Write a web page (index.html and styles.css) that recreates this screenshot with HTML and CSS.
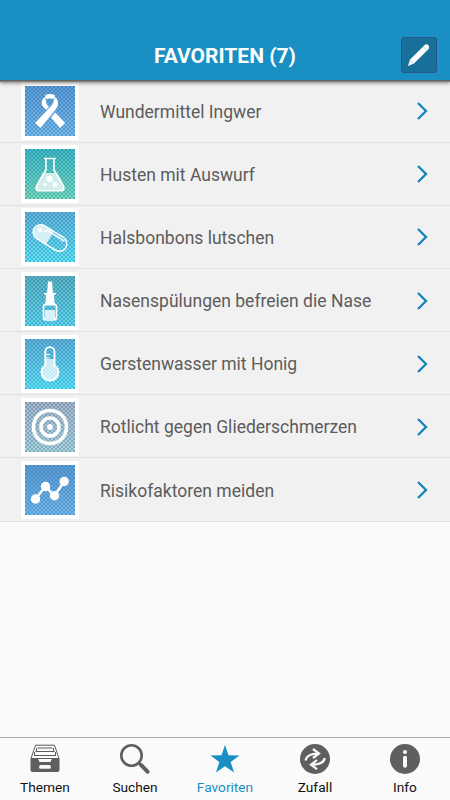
FILE: index.html
```html
<!DOCTYPE html>
<html lang="de">
<head>
<meta charset="utf-8">
<title>Favoriten</title>
<link rel="stylesheet" href="styles.css">
</head>
<body>
<header class="header">
  <h1>FAVORITEN (7)</h1>
  <button class="edit" aria-label="Bearbeiten">
    <svg width="36" height="36" viewBox="0 0 36 36"><path d="M7 29l2-6.500L23.500 8.200q2-1.700 3.800 .1t.3 3.800L13 26.500z" fill="#fff"/><path d="M8.700 22.800l4 3.800M22.300 9.700l3.900 3.900" stroke="#b5ced9" stroke-width="1"/></svg>
  </button>
</header>
<main class="list">
  <a class="row"><span class="tile blue"><svg viewBox="0 0 50 50"><g fill="#fff"><path d="M20 10.300Q20.500 8 25 8T30 10.300L29.300 13.300Q25 11.800 20.700 13.300z"/><path d="M19.300 11L21.200 14.500Q20.500 18 24 20.800L21.300 24Q14.500 18.500 17.500 13.500z"/><path d="M30.700 11L28.800 14Q29 17 26.500 19.500L10 37L15.500 42L31 23Q35.500 17.500 30.700 11z"/><path d="M26 31.500L30.300 26.500L40.200 37L35 42z"/></g></svg></span><span class="label">Wundermittel Ingwer</span><svg class="chevron" viewBox="0 0 12 20"><path d="M2 2l8 8-8 8"/></svg></a>
  <a class="row"><span class="tile green"><svg viewBox="0 0 50 50"><path d="M17.500 24h15l6.500 14q0 3.500-3 3.500H14q-3 0-3-3.500z" fill="#fff" opacity=".72"/><path d="M19 9.500h12M21 10v11L11.500 37q-1.500 4.800 2.500 4.800h22q4 0 2.500-4.800L29 21V10" fill="none" stroke="#fff" stroke-width="1.600"/><circle cx="24.500" cy="30" r="3.200" fill="#fff"/><circle cx="30" cy="35.500" r="2.600" fill="#fff"/><circle cx="20" cy="35.500" r="1.700" fill="#fff"/></svg></span><span class="label">Husten mit Auswurf</span><svg class="chevron" viewBox="0 0 12 20"><path d="M2 2l8 8-8 8"/></svg></a>
  <a class="row"><span class="tile cyan"><svg viewBox="0 0 50 50"><g transform="rotate(32 25 26)"><path d="M25 18.500H14.500a7.500 7.500 0 0 0 0 15H25z" fill="#fff" opacity=".75"/><rect x="6.500" y="18.500" width="37" height="15" rx="7.500" fill="none" stroke="#fff" stroke-width="1.500"/><path d="M18 21h20" stroke="#fff" stroke-width="1.700" stroke-linecap="round"/></g><circle cx="15" cy="18" r="2.300" fill="#fff"/><circle cx="20" cy="19.500" r="1.300" fill="#fff"/><circle cx="37.500" cy="28.500" r="1.100" fill="#fff"/></svg></span><span class="label">Halsbonbons lutschen</span><svg class="chevron" viewBox="0 0 12 20"><path d="M2 2l8 8-8 8"/></svg></a>
  <a class="row"><span class="tile teal"><svg viewBox="0 0 50 50"><path d="M23 5.500h4l1 11.500h3V18.500h-2l.5 8.500h-9l.5-8.500h-2V17h3z" fill="#fff"/><rect x="18.500" y="28" width="13" height="16" rx="3" fill="none" stroke="#fff" stroke-width="1.700"/><path d="M20 27h10v2.500H20z" fill="#fff"/><path d="M20 34h10v9H20z" fill="#fff" opacity=".78"/></svg></span><span class="label">Nasenspülungen befreien die Nase</span><svg class="chevron" viewBox="0 0 12 20"><path d="M2 2l8 8-8 8"/></svg></a>
  <a class="row"><span class="tile cyan"><svg viewBox="0 0 50 50"><path d="M20.500 20h9v7.500q4 2 4 6a8.500 8.500 0 0 1-17 0q0-4 4-6z" fill="#fff" opacity=".72"/><path d="M20.300 12.700a4.600 4.600 0 0 1 9.200 0V26.500q4 2.500 4 6.500a8.500 8.500 0 0 1-17 0q0-4 3.800-6.500z" fill="none" stroke="#fff" stroke-width="1.900"/><path d="M21 15.500h4M21 19h3" stroke="#fff" stroke-width="1.100"/></svg></span><span class="label">Gerstenwasser mit Honig</span><svg class="chevron" viewBox="0 0 12 20"><path d="M2 2l8 8-8 8"/></svg></a>
  <a class="row"><span class="tile gray"><svg viewBox="0 0 50 50"><g fill="none" stroke="#fff" stroke-width="3.600"><circle cx="25" cy="25" r="16.500"/><circle cx="25" cy="25" r="9"/></g><circle cx="25" cy="25" r="2.900" fill="#fff"/></svg></span><span class="label">Rotlicht gegen Gliederschmerzen</span><svg class="chevron" viewBox="0 0 12 20"><path d="M2 2l8 8-8 8"/></svg></a>
  <a class="row"><span class="tile blue"><svg viewBox="0 0 50 50"><path d="M10.500 34L20.500 21.500L29.500 31L39 16.500" fill="none" stroke="#fff" stroke-width="2.500"/><g fill="#fff"><circle cx="10.500" cy="34" r="4.700"/><circle cx="20.500" cy="21.500" r="4.700"/><circle cx="29.500" cy="30.800" r="4.700"/><circle cx="39.200" cy="16.500" r="4.700"/></g></svg></span><span class="label">Risikofaktoren meiden</span><svg class="chevron" viewBox="0 0 12 20"><path d="M2 2l8 8-8 8"/></svg></a>
</main>
<nav class="tabs">
  <a class="tab"><svg viewBox="0 0 30 30"><path d="M5.500 1.200h19L29 14.500H1z" fill="#fafafa" stroke="#5a5a5a" stroke-width="1"/><path d="M7.500 4h15M6.500 4v4M23.500 4v4M5.500 7.500h19M4.500 8v4M25.500 8v4M5 11.500h20" fill="none" stroke="#5a5a5a" stroke-width="1"/><path d="M.5 14.500h7.500l1.500 3.500h11l1.500-3.500h7.500V26q0 2-2 2H2.500q-2 0-2-2z" fill="#5f5f5f"/><rect x="9" y="21" width="12" height="3.800" rx="1.900" fill="#fafafa"/></svg>Themen</a>
  <a class="tab"><svg viewBox="0 0 30 30"><circle cx="11.500" cy="11.500" r="10.200" fill="none" stroke="#5f5f5f" stroke-width="2.600"/><path d="M19 19l2.500 2.500" stroke="#5f5f5f" stroke-width="2.500"/><path d="M21.200 21.200l6.300 6.500" stroke="#5f5f5f" stroke-width="4" stroke-linecap="round"/></svg>Suchen</a>
  <a class="tab active"><svg viewBox="0 0 30 30"><path d="M15 1l3.500 10.300L29.500 11.500L20.700 18L24 28.500L15 22.200L6 28.500L9.300 18L.5 11.500l11-.2z" fill="#1a8fc3"/></svg>Favoriten</a>
  <a class="tab"><svg viewBox="0 0 30 30"><circle cx="15" cy="15" r="15" fill="#5f5f5f"/><path d="M5.500 16.500Q7 9.500 18 9.500M13 5l6 4.500l-6 4.500M24.800 14Q23.500 20.700 12 20.700M17 16l-6 4.700l6 4.500" fill="none" stroke="#fafafa" stroke-width="2.200"/></svg>Zufall</a>
  <a class="tab"><svg viewBox="0 0 30 30"><circle cx="15" cy="15" r="15" fill="#5f5f5f"/><circle cx="15" cy="8" r="2.100" fill="#fafafa"/><path d="M15 13.700v8" stroke="#fafafa" stroke-width="4" stroke-linecap="round"/></svg>Info</a>
</nav>
</body>
</html>
```
FILE: styles.css
```css
* { box-sizing: border-box; }
body {
  margin: 0;
  width: 450px;
  height: 800px;
  display: flex;
  flex-direction: column;
  overflow: hidden;
  background: #fafafa;
  font-family: Roboto, sans-serif;
}
.header {
  height: 80px;
  flex: none;
  display: grid;
  grid-template-columns: 1fr auto 1fr;
  align-items: start;
  padding: 37px 13px 0;
  background: #1a8fc3;
  box-shadow: 0 1px 0 #65645f, 0 2px 1px #85807d, 0 3px 4px rgba(0, 0, 0, .45);
  position: relative;
  z-index: 1;
}
h1 {
  grid-column: 2;
  margin: 6px 0 0;
  color: #fff;
  font-size: 21px;
  line-height: 26px;
  font-weight: 700;
}
.edit {
  justify-self: end;
  width: 36px;
  height: 36px;
  padding: 0;
  border: 0;
  border-radius: 4px;
  background: #176f9a;
  box-shadow: inset 0 0 0 1px #27568a;
}
.edit svg { display: block; }
.list { flex: 1; margin-top: -.4px; }
.row {
  height: 63.15px;
  display: flex;
  align-items: center;
  padding: 1px 22.5px 0 21px;
  background: #f1f1f1;
  border-bottom: 1px solid #e1e1e1;
}
.tile {
  width: 58px;
  height: 58px;
  flex: none;
  border: 4px solid #fff;
  background-color: #fff;
}
.tile svg {
  display: block;
  width: 50px;
  height: 50px;
  background-image:
    radial-gradient(circle at 1px 1px, rgba(20, 80, 130, .3) .7px, transparent 1px),
    radial-gradient(circle at 1px 1px, rgba(20, 80, 130, .3) .7px, transparent 1px),
    linear-gradient(var(--top), var(--bottom));
  background-size: 4px 4px, 4px 4px, auto;
  background-position: 0 0, 2px 2px, 0 0;
}
.blue { --top: #5d9ed9; --bottom: #76bbee; }
.green { --top: #3fbec6; --bottom: #78dfc0; }
.cyan { --top: #62b5dc; --bottom: #60e8fa; }
.teal { --top: #5bb4c1; --bottom: #60d9f0; }
.gray { --top: #abb9ca; --bottom: #add5dc; }
.label {
  flex: 1;
  margin: 1px 0 0 21px;
  color: #5c5c5c;
  font-size: 17.53px;
  line-height: 24px;
  white-space: nowrap;
}
.chevron {
  width: 12px;
  height: 20px;
  fill: none;
  stroke: #1684bb;
  stroke-width: 2.3;
}
.tabs {
  height: 63px;
  flex: none;
  display: grid;
  grid-template-columns: repeat(5, 1fr);
  border-top: 1px solid #aaa;
  background: #fafafa;
}
.tab {
  display: flex;
  flex-direction: column;
  align-items: center;
  padding-top: 6px;
  color: #111;
  font-size: 13.7px;
  line-height: 16px;
}
.tab svg { width: 30px; height: 30px; margin-bottom: 5px; }
.active { color: #1a8fc3; }
```
